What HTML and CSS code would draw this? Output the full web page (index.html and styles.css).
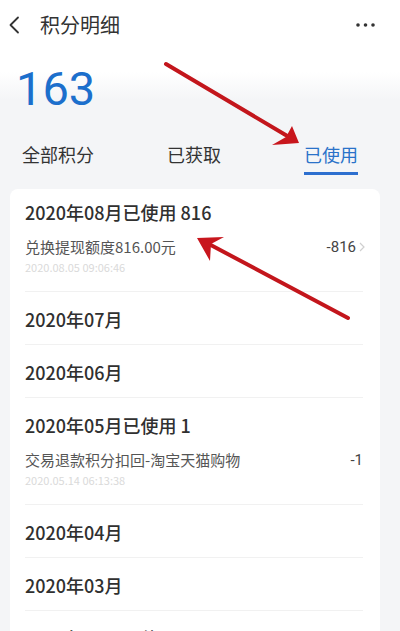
FILE: index.html
```html
<!DOCTYPE html>
<html lang="zh-CN">
<head>
<meta charset="utf-8">
<title>积分明细</title>
<link rel="stylesheet" href="styles.css">
</head>
<body>
<div class="page">
  <header class="topbar">
    <svg class="back" width="14" height="18" viewBox="0 0 14 18"><path d="M11 1.5 L3.5 9 L11 16.5" fill="none" stroke="#333" stroke-width="1.8" stroke-linecap="round" stroke-linejoin="round"/></svg>
    <span class="title">积分明细</span>
    <svg class="more" width="22" height="6" viewBox="0 0 22 6"><circle cx="3" cy="3" r="1.8" fill="#333"/><circle cx="10.5" cy="3" r="1.8" fill="#333"/><circle cx="18" cy="3" r="1.8" fill="#333"/></svg>
  </header>

  <div class="summary">
    <div class="total">163</div>
    <nav class="tabs">
      <span class="tab tab-all">全部积分</span>
      <span class="tab tab-got">已获取</span>
      <span class="tab tab-used active">已使用</span>
    </nav>
  </div>

  <section class="card">
    <div class="group">
      <div class="month">2020年08月已使用 816</div>
      <div class="item">
        <div class="item-main">
          <div class="item-title">兑换提现额度816.00元</div>
          <div class="item-time">2020.08.05 09:06:46</div>
        </div>
        <div class="item-amount">-816<svg class="chev" width="6" height="10" viewBox="0 0 6 10"><path d="M1 1 L5 5 L1 9" fill="none" stroke="#cfcfcf" stroke-width="1.2"/></svg></div>
      </div>
    </div>
    <div class="group"><div class="month">2020年07月</div></div>
    <div class="group"><div class="month">2020年06月</div></div>
    <div class="group">
      <div class="month">2020年05月已使用 1</div>
      <div class="item">
        <div class="item-main">
          <div class="item-title">交易退款积分扣回-淘宝天猫购物</div>
          <div class="item-time">2020.05.14 06:13:38</div>
        </div>
        <div class="item-amount">-1</div>
      </div>
    </div>
    <div class="group"><div class="month">2020年04月</div></div>
    <div class="group"><div class="month">2020年03月</div></div>
    <div class="group"><div class="month">2020年02月已使用 333</div></div>
  </section>

  <svg class="annot" width="400" height="631" viewBox="0 0 400 631">
    <g stroke="#c3161c" stroke-width="4" stroke-linecap="round" fill="none">
      <line x1="166" y1="64" x2="289" y2="137"/>
      <line x1="348" y1="318" x2="207" y2="243"/>
    </g>
    <g fill="#c8161d">
      <polygon points="299,143 272,145 286,137 292,126"/>
      <polygon points="197,238 224,237 211,244 210,261"/>
    </g>
  </svg>
</div>
</body>
</html>
```

FILE: styles.css
```css
* { box-sizing: border-box; }

html, body {
  margin: 0;
  padding: 0;
  background: #f4f5f7;
}

body {
  font-family: "Noto Sans CJK SC", "Noto Sans", Roboto, sans-serif;
  color: #333;
}

.page {
  position: relative;
  width: 400px;
  height: 631px;
  overflow: hidden;
}

.topbar {
  display: flex;
  align-items: center;
  height: 50px;
  padding-left: 7px;
  background: #fff;
}

.title {
  margin-left: 19px;
  font-size: 20px;
  color: #333;
  line-height: 24px;
}

.more {
  margin-left: auto;
  margin-right: 23px;
}

.summary {
  background: linear-gradient(to bottom, #fff 0px, #fff 22px, #f4f5f7 50px);
  padding-top: 13px;
}

.total {
  font-family: Roboto, "Noto Sans", sans-serif;
  font-size: 47px;
  line-height: 52px;
  color: #1c6fcc;
  padding-left: 16px;
}

.tabs {
  display: flex;
  padding: 0 0 0 22px;
  margin-top: 27px;
}

.tab {
  font-size: 18px;
  line-height: 24px;
  padding-bottom: 6px;
  border-bottom: 3px solid transparent;
  color: #333;
}

.tab-got {
  margin-left: 73px;
}

.tab-used {
  margin-left: 83px;
}

.tab.active {
  color: #2a72c9;
  border-bottom-color: #2d6fcf;
}

.card {
  margin: 14px 20px 0 10px;
  background: #fff;
  border-radius: 8px;
  padding: 0 17px 0 15px;
}

.group {
  padding: 15px 0 13px 0;
  border-bottom: 1px solid #f1f1f1;
}

.group:first-child {
  padding-top: 11px;
}

.month {
  font-size: 18px;
  font-weight: 500;
  line-height: 24px;
  color: #303030;
}

.item {
  display: flex;
  justify-content: space-between;
  align-items: flex-start;
  margin-top: 13px;
  padding-bottom: 4px;
}

.item-title {
  font-size: 15px;
  line-height: 20px;
  color: #555;
}

.item-time {
  margin-top: 3px;
  font-size: 11px;
  line-height: 14px;
  color: #dadada;
}

.item-amount {
  display: flex;
  align-items: center;
  gap: 3px;
  font-family: Roboto, "Noto Sans", sans-serif;
  font-size: 15px;
  line-height: 20px;
  color: #444;
}

.chev {
  margin-right: -2px;
}

.annot {
  position: absolute;
  left: 0;
  top: 0;
  pointer-events: none;
}
```
